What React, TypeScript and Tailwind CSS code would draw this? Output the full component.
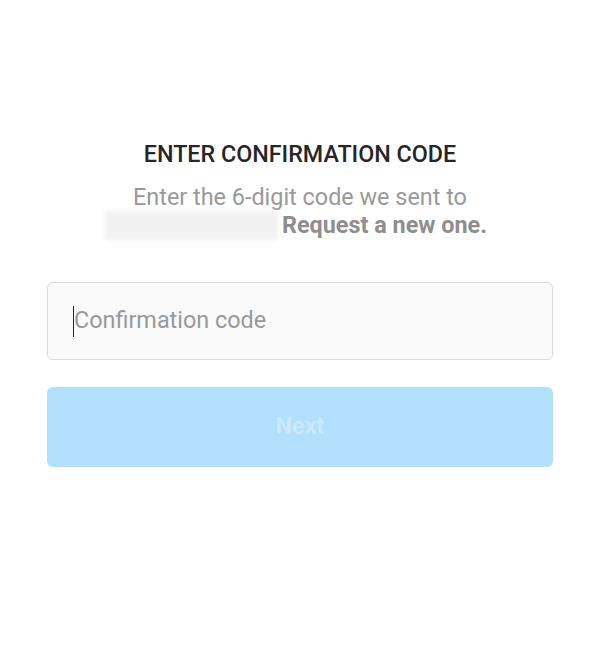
export default function App() {
  return (
    <div className="min-h-[656px] w-full bg-white font-['Roboto',sans-serif]">
      <div className="flex flex-col items-center px-[47px] pt-[139px]">
        <h1 className="text-[23.3px] font-medium leading-[30px] text-[#262626]">
          ENTER CONFIRMATION CODE
        </h1>
        <p className="mt-[14px] text-center text-[23.4px] leading-[28px] text-[#999999]">
          Enter the 6-digit code we sent to
          <br />
          <span className="mr-[4px] inline-block h-[29px] w-[173px] align-top bg-[#f1f1f1] blur-[2px]" />
          <span className="font-bold text-[#8e8e8e]">Request a new one.</span>
          <span className="inline-block w-[8px]" />
        </p>

        <div className="mt-[42px] flex h-[78px] w-full items-center rounded-[6px] border border-[#dbdbdb] bg-[#fafafa] pl-[25px]">
          <span className="h-[31px] w-px bg-[#262626]" />
          <span className="text-[23.4px] text-[#999999]">Confirmation code</span>
        </div>

        <button className="mt-[27px] flex h-[80px] w-full items-center justify-center rounded-[6px] bg-[#b2dffc] text-[23.4px] font-bold text-[#c9e9fd]">
          Next
        </button>
      </div>
    </div>
  );
}
